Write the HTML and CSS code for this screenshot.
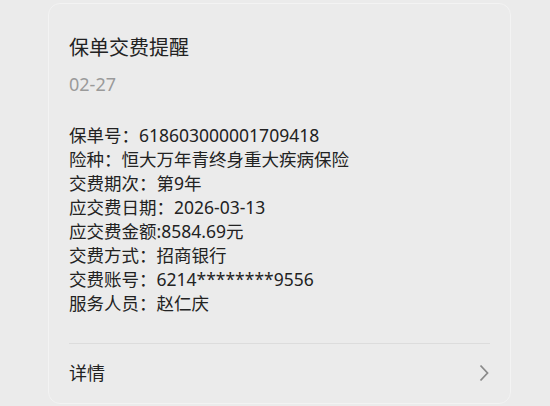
FILE: index.html
```html
<!DOCTYPE html>
<html lang="zh-CN">
<head>
<meta charset="utf-8">
<link rel="stylesheet" href="styles.css">
</head>
<body>
<div class="card">
  <div class="main">
    <div class="title">保单交费提醒</div>
    <div class="date">02-27</div>
    <div class="info">
      <div>保单号：618603000001709418</div>
      <div>险种：恒大万年青终身重大疾病保险</div>
      <div>交费期次：第9年</div>
      <div>应交费日期：2026-03-13</div>
      <div>应交费金额:8584.69元</div>
      <div>交费方式：招商银行</div>
      <div>交费账号：6214********9556</div>
      <div>服务人员：赵仁庆</div>
    </div>
  </div>
  <div class="footer">
    <span class="more">详情</span>
    <svg class="chev" width="10" height="18" viewBox="0 0 10 18"><path d="M1.5 1.5 L8.5 9 L1.5 16.5" fill="none" stroke="#8a8a8a" stroke-width="1.8"/></svg>
  </div>
</div>
</body>
</html>
```

FILE: styles.css
```css
html, body {
  margin: 0;
  padding: 0;
  background: #ebebeb;
}
body {
  width: 550px;
  height: 406px;
  overflow: hidden;
  font-family: "Noto Sans", "Noto Sans CJK SC", sans-serif;
  color: #222222;
}
.card {
  box-sizing: border-box;
  margin: 3px 0 0 48px;
  width: 463px;
  height: 401px;
  border: 1px solid #f3f3f3;
  border-radius: 12px;
  background: #ebebeb;
  padding: 0 20px;
  display: flex;
  flex-direction: column;
}
.main {
  padding-top: 30px;
  padding-bottom: 28px;
  border-bottom: 1px solid #dcdcdc;
}
.title {
  font-size: 20px;
  line-height: 28px;
}
.date {
  margin-top: 10px;
  font-size: 18px;
  line-height: 24px;
  color: #9a9a9a;
}
.info {
  margin-top: 27px;
  font-size: 17.5px;
  line-height: 24px;
}
.footer {
  flex: 1;
  display: flex;
  align-items: center;
  justify-content: space-between;
  padding-right: 1px;
  padding-bottom: 1px;
}
.more {
  font-size: 18px;
  line-height: 24px;
}
.chev {
  display: block;
}
```
